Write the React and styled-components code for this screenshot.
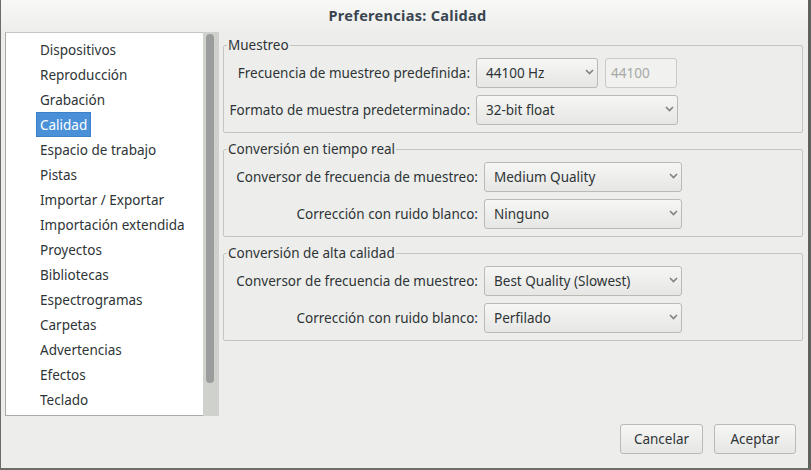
import styled, { createGlobalStyle } from "styled-components";

const GlobalStyle = createGlobalStyle`
  html, body {
    margin: 0;
    padding: 0;
    background: #edeeec;
  }
  body {
    font-family: "Noto Sans", "DejaVu Sans", sans-serif;
    font-size: 13.5px;
    color: #2e3436;
  }
`;

const categories = [
  "Dispositivos",
  "Reproducción",
  "Grabación",
  "Calidad",
  "Espacio de trabajo",
  "Pistas",
  "Importar / Exportar",
  "Importación extendida",
  "Proyectos",
  "Bibliotecas",
  "Espectrogramas",
  "Carpetas",
  "Advertencias",
  "Efectos",
  "Teclado",
];

function Chevron() {
  return (
    <svg width="9" height="6" viewBox="0 0 9 6">
      <path d="M1 1 L4.5 4.5 L8 1" fill="none" stroke="#80837f" strokeWidth="1.6" />
    </svg>
  );
}

function Combo({ value, width }) {
  return (
    <ComboBox $width={width}>
      <span>{value}</span>
      <Chevron />
    </ComboBox>
  );
}

function App() {
  return (
    <Window>
      <GlobalStyle />

      {/* title */}
      <TitleBar>Preferencias: Calidad</TitleBar>

      <Body>
        {/* category list */}
        <Sidebar>
          <List>
            {categories.map((c) => (
              <Item key={c}>
                <ItemLabel $active={c === "Calidad"}>{c}</ItemLabel>
              </Item>
            ))}
          </List>
          <Trough>
            <Thumb />
          </Trough>
        </Sidebar>

        {/* settings */}
        <Content>
          <Group>
            <Legend>Muestreo</Legend>
            <Rows $labelWidth={241}>
              <Label>Frecuencia de muestreo predefinida:</Label>
              <Inline>
                <Combo value="44100 Hz" width={122} />
                <Entry>44100</Entry>
              </Inline>
              <Label>Formato de muestra predeterminado:</Label>
              <Combo value="32-bit float" width={202} />
            </Rows>
          </Group>

          <Group>
            <Legend>Conversión en tiempo real</Legend>
            <Rows $labelWidth={249}>
              <Label>Conversor de frecuencia de muestreo:</Label>
              <Combo value="Medium Quality" width={198} />
              <Label>Corrección con ruido blanco:</Label>
              <Combo value="Ninguno" width={198} />
            </Rows>
          </Group>

          <Group>
            <Legend>Conversión de alta calidad</Legend>
            <Rows $labelWidth={249}>
              <Label>Conversor de frecuencia de muestreo:</Label>
              <Combo value="Best Quality (Slowest)" width={198} />
              <Label>Corrección con ruido blanco:</Label>
              <Combo value="Perfilado" width={198} />
            </Rows>
          </Group>
        </Content>
      </Body>

      <Footer>
        <Button $width={83}>Cancelar</Button>
        <Button $width={82}>Aceptar</Button>
      </Footer>
    </Window>
  );
}

const Window = styled.div`
  box-sizing: border-box;
  width: 811px;
  height: 470px;
  display: flex;
  flex-direction: column;
  background: #edeeec;
  border-left: 1px solid #6b6d69;
  border-right: 3px solid #5f615d;
  border-bottom: 2px solid #6b6d69;
`;

const TitleBar = styled.div`
  height: 30px;
  flex: none;
  display: flex;
  align-items: center;
  justify-content: center;
  padding-left: 6px;
  font-weight: 700;
  font-size: 14.5px;
  letter-spacing: 0.3px;
  color: #3a4550;
  background: linear-gradient(#f8f9f7, #eeefed);
`;

const Body = styled.div`
  flex: 1;
  display: flex;
  padding: 2px 5px 0 4px;
  min-height: 0;
`;

const Sidebar = styled.div`
  width: 214px;
  height: 384px;
  flex: none;
  display: flex;
`;

const List = styled.ul`
  flex: 1;
  margin: 0;
  padding: 4px 0 0 30px;
  list-style: none;
  background: #fff;
  border: 1px solid #a9aba7;
  border-top-color: #c4c6c2;
  border-right: none;
`;

const Item = styled.li`
  height: 25px;
  display: flex;
  align-items: center;
`;

const ItemLabel = styled.span`
  box-sizing: border-box;
  height: 25px;
  display: flex;
  align-items: center;
  padding: 0 3px;
  border: 1px solid ${(p) => (p.$active ? "#3d7fc8" : "transparent")};
  background: ${(p) => (p.$active ? "#4a90d9" : "transparent")};
  color: ${(p) => (p.$active ? "#fff" : "#2e3436")};
`;

const Trough = styled.div`
  width: 16px;
  flex: none;
  background: #cfd1cd;
  padding: 2px 0 0 3px;
  box-sizing: border-box;
`;

const Thumb = styled.div`
  width: 8px;
  height: 349px;
  border-radius: 4px;
  background: #9a9d9b;
`;

const Content = styled.div`
  flex: 1;
  margin: 4px 0 0 4px;
  display: flex;
  flex-direction: column;
  gap: 7px;
`;

const Group = styled.fieldset`
  margin: 0;
  padding: 0 0 7px 3px;
  border: 1px solid #c3c5c1;
  border-radius: 2px;
  min-width: 0;
`;

const Legend = styled.legend`
  padding: 0 1px;
  line-height: 18px;
  height: 18px;
`;

const Rows = styled.div`
  display: grid;
  grid-template-columns: minmax(${(p) => p.$labelWidth}px, auto) auto;
  justify-content: start;
  column-gap: 6px;
  row-gap: 7px;
  padding: 4px 0 0 2px;
`;

const Label = styled.div`
  display: flex;
  align-items: center;
  justify-content: flex-end;
  white-space: nowrap;
`;

const Inline = styled.div`
  display: flex;
  gap: 7px;
`;

const ComboBox = styled.div`
  box-sizing: border-box;
  width: ${(p) => p.$width}px;
  height: 30px;
  display: flex;
  align-items: center;
  justify-content: space-between;
  padding: 0 3px 2px 9px;
  border: 1px solid #b9bbb7;
  border-radius: 3px;
  background: linear-gradient(#f6f6f5, #e6e7e5);
  color: #2e3436;
  white-space: nowrap;
  span {
    padding-top: 2px;
  }
`;

const Entry = styled.div`
  box-sizing: border-box;
  width: 72px;
  height: 30px;
  display: flex;
  align-items: center;
  padding-left: 5px;
  border: 1px solid #c8cac6;
  border-radius: 3px;
  background: #f1f1ef;
  color: #a7a9a5;
`;

const Footer = styled.div`
  flex: none;
  display: flex;
  justify-content: flex-end;
  gap: 11px;
  padding: 8px 12px 14px 0;
`;

const Button = styled.button`
  box-sizing: border-box;
  width: ${(p) => p.$width}px;
  height: 30px;
  padding: 0;
  font: inherit;
  color: #2e3436;
  border: 1px solid #b9bbb7;
  border-radius: 3px;
  background: linear-gradient(#f6f6f5, #e6e7e5);
`;

export default App;
